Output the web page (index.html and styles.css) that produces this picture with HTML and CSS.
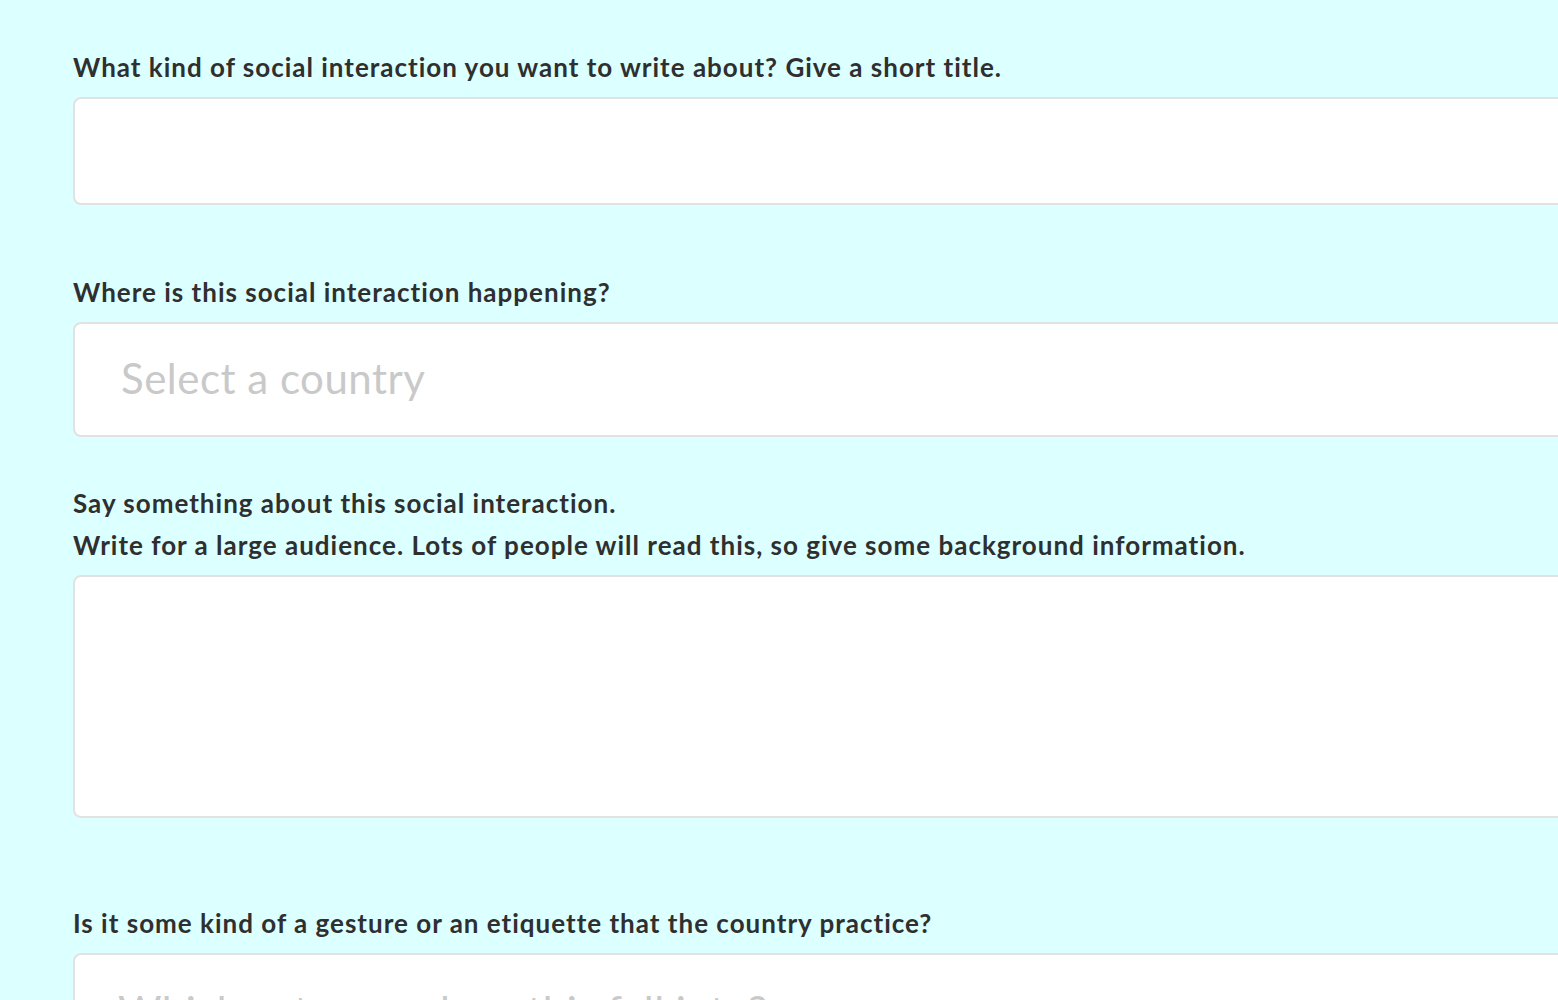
FILE: index.html
```html
<!DOCTYPE html>
<html lang="en">
<head>
<meta charset="utf-8">
<title>Social interaction form</title>
<link rel="stylesheet" href="styles.css">
</head>
<body>
<form class="form">
  <div class="field field-first">
    <label class="label" for="title">What kind of social interaction you want to write about? Give a short title.</label>
    <input class="control control-title" id="title" type="text">
  </div>
  <div class="field field-second">
    <label class="label" for="country">Where is this social interaction happening?</label>
    <input class="control control-select" id="country" type="text" placeholder="Select a country">
  </div>
  <div class="field field-third">
    <label class="label" for="about">Say something about this social interaction.<br>Write for a large audience. Lots of people will read this, so give some background information.</label>
    <textarea class="control control-area" id="about"></textarea>
  </div>
  <div class="field field-fourth">
    <label class="label" for="kind">Is it some kind of a gesture or an etiquette that the country practice?</label>
    <input class="control control-kind" id="kind" type="text" placeholder="Which category does this fall into?">
  </div>
</form>
</body>
</html>
```

FILE: styles.css
```css
html, body {
  margin: 0;
  padding: 0;
  height: 100%;
  overflow: hidden;
}

body {
  background: #dcffff;
  font-family: Lato, "Open Sans", sans-serif;
  color: #333333;
}

.form {
  display: flex;
  flex-direction: column;
  padding: 46px 0 0 73px;
  width: 1700px;
}

.field {
  display: flex;
  flex-direction: column;
  gap: 9px;
}

.field-second { margin-top: 66px; }
.field-third { margin-top: 45px; }
.field-fourth { margin-top: 84px; }

.label {
  font-size: 26px;
  font-weight: 700;
  line-height: 42px;
  letter-spacing: 1px;
  color: #2f2f2f;
}

.control {
  box-sizing: border-box;
  display: block;
  width: 100%;
  margin: 0;
  background: #ffffff;
  border: 2px solid #e2e2e2;
  border-radius: 8px;
  font-family: Lato, "Open Sans", sans-serif;
  font-size: 42px;
  letter-spacing: 0.5px;
  color: #333333;
  outline: none;
  resize: none;
}

.control::placeholder {
  color: #c9c9c9;
  opacity: 1;
}

.control-title {
  height: 108px;
  padding: 0 46px;
}

.control-select {
  height: 115px;
  padding: 0 46px 4px;
}

.control-area {
  height: 243px;
  padding: 20px 46px;
}

.control-kind {
  height: 115px;
  padding: 0 43px;
}
```
